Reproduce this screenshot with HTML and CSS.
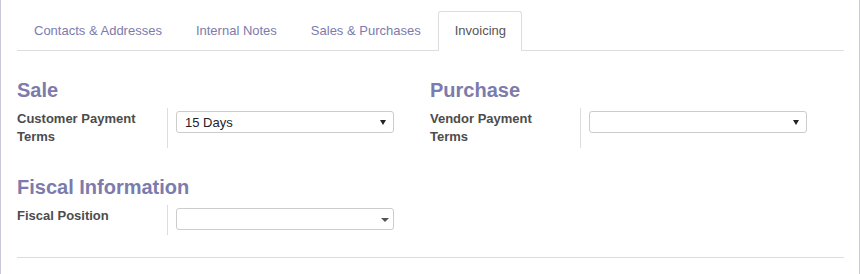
FILE: index.html
```html
<!DOCTYPE html>
<html lang="en">
<head>
  <meta charset="UTF-8" />
  <title>Invoicing</title>
  <link rel="stylesheet" href="styles.css">
</head>
<body>

<div class="sheet">
  <ul class="tabs">
    <li class="tab">Contacts &amp; Addresses</li>
    <li class="tab">Internal Notes</li>
    <li class="tab">Sales &amp; Purchases</li>
    <li class="tab active">Invoicing</li>
  </ul>

  <div class="groups">
    <div class="group">
      <h2>Sale</h2>
      <div class="row">
        <div class="label">Customer Payment Terms</div>
        <div class="value">
          <div class="select">
            <span>15 Days</span>
            <svg class="arrow" width="6" height="5" viewBox="0 0 6 5"><path d="M0 0H6L3 5Z" fill="#222"/></svg>
          </div>
        </div>
      </div>
    </div>

    <div class="group">
      <h2>Purchase</h2>
      <div class="row">
        <div class="label">Vendor Payment Terms</div>
        <div class="value">
          <div class="select">
            <span></span>
            <svg class="arrow" width="6" height="5" viewBox="0 0 6 5"><path d="M0 0H6L3 5Z" fill="#222"/></svg>
          </div>
        </div>
      </div>
    </div>

    <div class="group">
      <h2>Fiscal Information</h2>
      <div class="row">
        <div class="label">Fiscal Position</div>
        <div class="value">
          <div class="select">
            <span></span>
            <svg class="caret" width="8" height="4" viewBox="0 0 8 4"><path d="M0 0H8L4 4Z" fill="#555"/></svg>
          </div>
        </div>
      </div>
    </div>
  </div>

  <div class="footer-line"></div>
</div>

</body>
</html>
```

FILE: styles.css
```css
body {
  margin: 0;
  font-family: "Liberation Sans", Arial, sans-serif;
  font-size: 13px;
  color: #4c4c4c;
  background: white;
}
.sheet {
  height: 274px;
  box-sizing: border-box;
  width: 860px;
  border-left: 1px solid #c9c8d8;
  border-right: 1px solid #c9c8d8;
  padding: 11px 15px 0 16px;
}
.tabs {
  display: flex;
  list-style: none;
  margin: 0;
  padding: 0;
  border-bottom: 1px solid #ddd;
}
.tab {
  padding: 10px 15px 10px 16px;
  line-height: 18px;
  border: 1px solid transparent;
  border-bottom: none;
  border-radius: 3px 3px 0 0;
  margin-right: 1px;
  margin-bottom: -1px;
  color: #7c7bad;
}
.tab.active {
  color: #555;
  border-color: #ddd;
  background: white;
  padding-bottom: 11px;
}
.groups {
  display: grid;
  grid-template-columns: 413px 413px;
  row-gap: 28px;
  padding-top: 28px;
}
h2 {
  margin: 0 0 7px;
  font-size: 20px;
  line-height: 22px;
  font-weight: bold;
  color: #7c7bad;
}
.row {
  display: flex;
}
.label {
  width: 151px;
  box-sizing: border-box;
  padding: 2px 20px 2px 0;
  font-weight: bold;
  line-height: 18px;
  border-right: 1px solid #ddd;
}
.value {
  padding: 3px 0 5px 8px;
}
.select {
  width: 218px;
  height: 22px;
  box-sizing: border-box;
  border: 1px solid #ccc;
  border-radius: 3px;
  display: flex;
  align-items: center;
  justify-content: space-between;
  padding: 0 7px 0 8px;
  color: #222;
  font-size: 13px;
}
.select .caret {
  margin-right: -3px;
  margin-top: 2px;
}
.footer-line {
  border-top: 1px solid #ddd;
  margin-top: 22px;
}
```
